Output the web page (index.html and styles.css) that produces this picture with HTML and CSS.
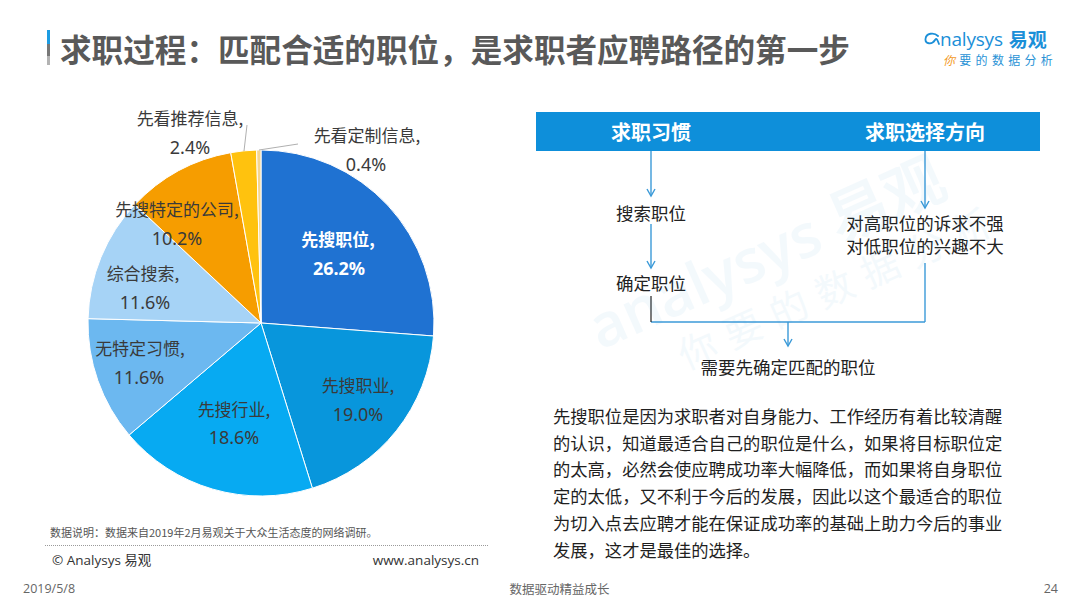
FILE: index.html
```html
<!DOCTYPE html>
<html lang="zh-CN">
<head>
<meta charset="utf-8">
<title>求职过程</title>
<link rel="stylesheet" href="styles.css">
</head>
<body>
<div class="page">
  <header class="header">
    <div class="title-wrap">
      <span class="accent"></span>
      <h1 class="title">求职过程：匹配合适的职位，是求职者应聘路径的第一步</h1>
    </div>
    <div class="logo">
      <div class="logo-top">
        <svg class="swoosh" width="16" height="14" viewBox="0 0 16 14"><path d="M14 4 C 10 0, 2 1, 1.5 7 C 1 12, 8 13, 11 8 C 12.5 5.5, 13.5 8, 15 12" fill="none" stroke="#1b8fd8" stroke-width="1.8" stroke-linecap="round"/></svg>
        <span class="logo-en">nalysys</span><span class="logo-cn">易观</span>
      </div>
      <div class="logo-sub"><span class="logo-ni">你</span>要的数据分析</div>
    </div>
  </header>

  <main class="main">
    <section class="left">
      <svg class="pie" width="520" height="420" viewBox="0 0 520 420">
        <g stroke="#ffffff" stroke-width="1">
          <path d="M261,223 L261,50 A173,173 0 0 1 433.51,236.03 Z" fill="#1f72d2"/>
          <path d="M261,223 L433.51,236.03 A173,173 0 0 1 312.39,388.19 Z" fill="#0896dc"/>
          <path d="M261,223 L312.39,388.19 A173,173 0 0 1 129.12,334.97 Z" fill="#07aaf2"/>
          <path d="M261,223 L129.12,334.97 A173,173 0 0 1 88.05,218.65 Z" fill="#6cb8f0"/>
          <path d="M261,223 L88.05,218.65 A173,173 0 0 1 134.89,104.57 Z" fill="#a6d3f6"/>
          <path d="M261,223 L134.89,104.57 A173,173 0 0 1 230.72,52.67 Z" fill="#f69d00"/>
          <path d="M261,223 L230.72,52.67 A173,173 0 0 1 256.65,50.05 Z" fill="#ffc20e"/>
          <path d="M261,223 L256.65,50.05 A173,173 0 0 1 261,50 Z" fill="#f5d58e"/>
        </g>
        <g stroke="#9a9a9a" stroke-width="0.8" fill="none">
          <line x1="244" y1="51" x2="247" y2="25"/>
          <line x1="259" y1="50" x2="298" y2="44"/>
        </g>
        <g class="pie-label">
          <text x="338" y="138" class="lbl-strong">先搜职位,</text>
          <text x="339" y="168" class="num-strong">26.2%</text>
          <text x="358" y="284">先搜职业,</text>
          <text x="358" y="314" class="num">19.0%</text>
          <text x="234" y="308">先搜行业,</text>
          <text x="234" y="337" class="num">18.6%</text>
          <text x="140" y="247">无特定习惯,</text>
          <text x="139" y="277" class="num">11.6%</text>
          <text x="143" y="172">综合搜索,</text>
          <text x="145" y="202" class="num">11.6%</text>
          <text x="177" y="108">先搜特定的公司,</text>
          <text x="177" y="138" class="num">10.2%</text>
          <text x="190" y="17">先看推荐信息,</text>
          <text x="190" y="47" class="num">2.4%</text>
          <text x="367" y="34">先看定制信息,</text>
          <text x="366" y="64" class="num">0.4%</text>
        </g>
      </svg>
      <p class="note">数据说明：数据来自2019年2月易观关于大众生活态度的网络调研。</p>
      <div class="copy-row">
        <span>© Analysys 易观</span>
        <span>www.analysys.cn</span>
      </div>
    </section>

    <section class="right">
      <div class="flow-bar">
        <span class="flow-head">求职习惯</span>
        <span class="flow-head">求职选择方向</span>
      </div>
      <svg class="flow" width="504" height="235" viewBox="0 0 504 235">
        <g stroke="#3b9ad8" stroke-width="1.4" fill="none">
          <line x1="115" y1="0" x2="115" y2="45"/>
          <polyline points="111,38 115,45 119,38"/>
          <line x1="115" y1="73" x2="115" y2="117"/>
          <polyline points="111,110 115,117 119,110"/>
          <line x1="389" y1="0" x2="389" y2="57"/>
          <polyline points="385,50 389,57 393,50"/>
          <line x1="389" y1="112" x2="389" y2="171"/>
          <line x1="115" y1="171" x2="389" y2="171"/>
          <line x1="252" y1="171" x2="252" y2="195"/>
          <polyline points="248,188 252,195 256,188"/>
        </g>
        <line x1="115" y1="145" x2="115" y2="171" stroke="#222" stroke-width="1.2"/>
        <g class="flow-text">
          <text x="115" y="61">搜索职位</text>
          <text x="115" y="131">确定职位</text>
          <text x="389" y="71">对高职位的诉求不强</text>
          <text x="389" y="94">对低职位的兴趣不大</text>
          <text x="252" y="215">需要先确定匹配的职位</text>
        </g>
      </svg>
      <p class="desc">先搜职位是因为求职者对自身能力、工作经历有着比较清醒的认识，知道最适合自己的职位是什么，如果将目标职位定的太高，必然会使应聘成功率大幅降低，而如果将自身职位定的太低，又不利于今后的发展，因此以这个最适合的职位为切入点去应聘才能在保证成功率的基础上助力今后的事业发展，这才是最佳的选择。</p>
    </section>
  </main>

  <div class="watermark">
    <span class="wm-en">analysys 易观</span>
    <span class="wm-sub">你要的数据分析</span>
  </div>

  <footer class="footer">
    <span>2019/5/8</span>
    <span class="footer-mid">数据驱动精益成长</span>
    <span>24</span>
  </footer>
</div>
</body>
</html>
```

FILE: styles.css
```css
* { box-sizing: border-box; }
html, body { margin: 0; padding: 0; background: #ffffff; }
body {
  font-family: "Noto Sans CJK SC", "Noto Sans", sans-serif;
  color: #222;
}
.page {
  position: relative;
  width: 1080px;
  height: 607px;
  overflow: hidden;
  background: #fff;
}

/* header */
.header {
  height: 100px;
  display: flex;
  justify-content: space-between;
  align-items: flex-start;
  padding: 30px 20px 0 47px;
}
.title-wrap {
  display: flex;
  align-items: flex-start;
  gap: 10px;
}
.accent {
  width: 3px;
  height: 35px;
  background: linear-gradient(#1c9ce2 0%, #1c9ce2 40%, #777 40%, #777 74%, #b3b3b3 74%, #b3b3b3 100%);
}
.title {
  margin: 0;
  font-size: 31.6px;
  line-height: 36px;
  font-weight: 700;
  color: #595959;
  letter-spacing: 0;
}
.logo {
  width: 136px;
  margin-top: 0;
  color: #1b8fd8;
}
.logo-top {
  display: flex;
  align-items: center;
  height: 18px;
}
.swoosh { flex: none; }
.logo-en {
  font-family: "Open Sans", "Noto Sans", sans-serif;
  font-size: 19px;
  line-height: 18px;
  letter-spacing: -0.2px;
  color: #1b8fd8;
}
.logo-cn {
  margin-left: 6px;
  font-size: 19px;
  line-height: 18px;
  font-weight: 700;
  color: #1b8fd8;
}
.logo-sub {
  margin-top: 5px;
  padding-left: 19px;
  font-size: 12px;
  line-height: 13px;
  letter-spacing: 4.3px;
  color: #2a93d6;
  white-space: nowrap;
}
.logo-ni { color: #f39a1e; font-style: italic; }

/* main */
.main {
  height: 470px;
  display: grid;
  grid-template-columns: 520px 1fr;
}
.left {
  display: flex;
  flex-direction: column;
}
.pie { display: block; }
.pie-label text {
  font-family: "Noto Sans CJK SC", "Noto Sans", sans-serif;
  font-size: 17px;
  fill: #3a3a3a;
  text-anchor: middle;
  dominant-baseline: central;
}
.pie-label text.num {
  font-family: "Noto Sans", "Open Sans", sans-serif;
  font-size: 18px;
}
.pie-label text.lbl-strong {
  fill: #ffffff;
  font-weight: 700;
}
.pie-label text.num-strong {
  font-family: "Noto Sans", "Open Sans", sans-serif;
  font-size: 18px;
  fill: #ffffff;
  font-weight: 700;
}
.note {
  margin: 5px 0 0 45px;
  width: 443px;
  padding: 0 0 5px 5px;
  font-size: 11px;
  line-height: 15px;
  color: #555;
  border-bottom: 1px dotted #9a9a9a;
}
.copy-row {
  margin: 4px 0 0 52px;
  width: 427px;
  display: flex;
  justify-content: space-between;
  font-family: "Open Sans", "Noto Sans CJK SC", sans-serif;
  font-size: 13.5px;
  line-height: 20px;
  color: #333;
}

.right {
  padding: 12px 0 0 16px;
}
.flow-bar {
  width: 504px;
  height: 39px;
  background: #0e8fda;
  display: flex;
  justify-content: space-between;
  align-items: center;
}
.flow-head {
  width: 230px;
  text-align: center;
  color: #ffffff;
  font-size: 20px;
  font-weight: 700;
}
.flow { display: block; }
.flow-text text {
  font-family: "Noto Sans CJK SC", sans-serif;
  font-size: 17.5px;
  fill: #222;
  text-anchor: middle;
  dominant-baseline: central;
}
.desc {
  margin: 17px 0 0 17px;
  width: 452px;
  font-size: 17.3px;
  line-height: 26.7px;
  color: #1f1f1f;
}

/* watermark overlay */
.watermark {
  position: absolute;
  left: 578px;
  top: 300px;
  width: 460px;
  transform: rotate(-24deg);
  transform-origin: left top;
  color: #2a93d6;
  opacity: 0.05;
  pointer-events: none;
}
.wm-en {
  display: block;
  font-family: "Open Sans", sans-serif;
  font-size: 60px;
  font-weight: 600;
  line-height: 64px;
  white-space: nowrap;
}
.wm-sub {
  display: block;
  padding-left: 70px;
  font-size: 38px;
  letter-spacing: 12px;
  white-space: nowrap;
}

/* footer */
.footer {
  height: 37px;
  display: flex;
  justify-content: space-between;
  align-items: center;
  padding: 0 22px 0 23px;
  font-family: "Open Sans", "Noto Sans CJK SC", sans-serif;
  font-size: 12.5px;
  color: #666;
}
.footer-mid {
  font-family: "Noto Sans CJK SC", sans-serif;
}
```
